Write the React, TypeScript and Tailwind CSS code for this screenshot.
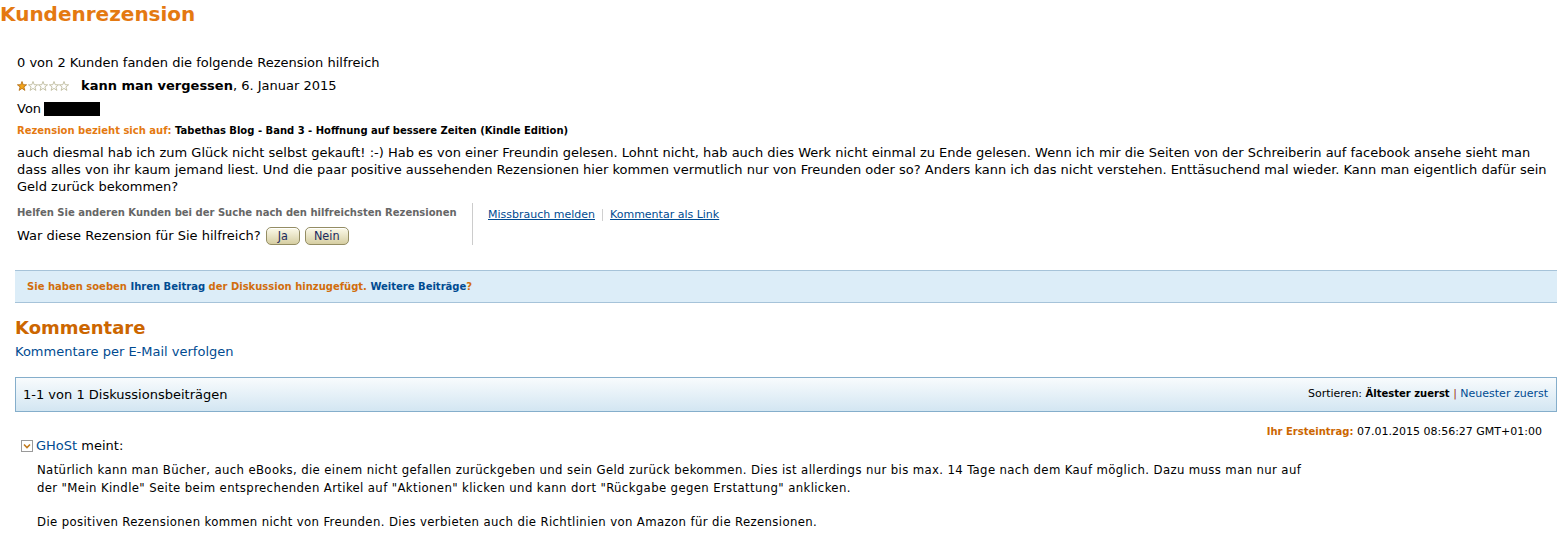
import React from "react";

const FONT = "font-['DejaVu_Sans','Verdana',sans-serif]";

function Star({ filled }: { filled: boolean }) {
  return (
    <svg width="10" height="10" viewBox="0 0 10 10" className="block">
      <polygon
        points="5,0.5 6.2,3.7 9.6,3.8 6.9,5.9 7.9,9.4 5,7.4 2.1,9.4 3.1,5.9 0.4,3.8 3.8,3.7"
        fill={filled ? "#f3a51b" : "#ffffff"}
        stroke={filled ? "#b06a10" : "#b8b493"}
        strokeWidth="0.8"
        strokeLinejoin="round"
      />
    </svg>
  );
}

function Stars({ rating }: { rating: number }) {
  return (
    <div className="flex items-center gap-[0.5px] w-[53px]">
      {[1, 2, 3, 4, 5].map((i) => (
        <Star key={i} filled={i <= rating} />
      ))}
    </div>
  );
}

function VoteButton({ label, width }: { label: string; width: string }) {
  return (
    <button
      className={`${width} h-[18px] rounded-[5px] border border-[#948d63] bg-gradient-to-b from-[#fcfaea] to-[#d6cea2] text-[12.5px] leading-[16px] text-[#1c2a5e] font-['DejaVu_Sans_Condensed','DejaVu_Sans',sans-serif] [font-stretch:condensed] shadow-[inset_0_1px_0_#fff]`}
    >
      {label}
    </button>
  );
}

function ToggleIcon() {
  return (
    <svg width="12" height="12" viewBox="0 0 12 12" className="block">
      <rect x="0.5" y="0.5" width="11" height="11" fill="#fff" stroke="#9a9a9a" />
      <polyline points="3,4.5 6,7.5 9,4.5" fill="none" stroke="#c07a1e" strokeWidth="1.6" />
    </svg>
  );
}

export default function App() {
  return (
    <div className={`${FONT} w-[1568px] h-[542px] overflow-hidden bg-white text-black text-[13px]`}>
      {/* ================= REVIEW ================= */}
      <h1 className="text-[20px] leading-[28px] font-bold text-[#e47911]">Kundenrezension</h1>

      <div className="ml-[15px] mr-[11px]">
        <div className="pl-[2px]">
          <div className="mt-[26px] leading-[17px]">0 von 2 Kunden fanden die folgende Rezension hilfreich</div>

          <div className="mt-[6px] flex items-center h-[17px]">
            <Stars rating={1} />
            <span className="ml-[11px]">
              <b>kann man vergessen</b>, 6. Januar 2015
            </span>
          </div>

          <div className="mt-[6px] flex items-center h-[17px]">
            <span>Von</span>
            <span className="ml-[3px] inline-block w-[56px] h-[14px] bg-black" />
          </div>

          <div className="mt-[7px] text-[10px] leading-[14px] font-bold">
            <span className="text-[#e47911]">Rezension bezieht sich auf:</span>{" "}
            <span>Tabethas Blog - Band 3 - Hoffnung auf bessere Zeiten (Kindle Edition)</span>
          </div>

          <p className="mt-[6px] leading-[17px] whitespace-nowrap">
            auch diesmal hab ich zum Glück nicht selbst gekauft! :-) Hab es von einer Freundin gelesen. Lohnt nicht, hab auch dies Werk nicht einmal zu Ende gelesen. Wenn ich mir die Seiten von der Schreiberin auf facebook ansehe sieht man
            <br />
            dass alles von ihr kaum jemand liest. Und die paar positive aussehenden Rezensionen hier kommen vermutlich nur von Freunden oder so? Anders kann ich das nicht verstehen. Enttäsuchend mal wieder. Kann man eigentlich dafür sein
            <br />
            Geld zurück bekommen?
          </p>

          {/* helpful votes + links */}
          <div className="mt-[8px] flex">
            <div className="w-[456px] h-[42px] border-r border-[#cccccc] pt-[3px]">
              <div className="text-[10px] leading-[14px] font-bold text-[#666666] whitespace-nowrap">
                Helfen Sie anderen Kunden bei der Suche nach den hilfreichsten Rezensionen
              </div>
              <div className="mt-[7px] flex items-center h-[18px] gap-[5px]">
                <span>War diese Rezension für Sie hilfreich?</span>
                <VoteButton label="Ja" width="w-[34px]" />
                <VoteButton label="Nein" width="w-[44px]" />
              </div>
            </div>
            <div className="pl-[15px] pt-[3px] flex items-center h-[20px] text-[11px] leading-[14px] text-[#004b91]">
              <a className="underline">Missbrauch melden</a>
              <span className="mx-[7px] w-px h-[12px] bg-[#d0d0d0]" />
              <a className="underline">Kommentar als Link</a>
            </div>
          </div>
        </div>

        {/* ================= INFO BAR ================= */}
        <div className="mt-[25px] h-[33px] border-y border-[#a6c3d9] bg-[#dcedf8] flex items-center pl-[12px] text-[10px] font-bold text-[#d16d0d]">
          <span>
            Sie haben soeben <span className="text-[#004b91]">Ihren Beitrag</span> der Diskussion hinzugefügt.{" "}
            <span className="text-[#004b91]">Weitere Beiträge</span>?
          </span>
        </div>

        {/* ================= COMMENTS ================= */}
        <h2 className="mt-[14px] text-[18px] leading-[22px] font-bold text-[#cc6600]">Kommentare</h2>
        <a className="block mt-[4px] leading-[17px] text-[#004b91]">Kommentare per E-Mail verfolgen</a>

        <div className="mt-[17px] h-[35px] border border-[#85aecb] bg-gradient-to-b from-[#f8fbfd] to-[#d3e6f2] flex items-center justify-between pl-[7px] pr-[8px]">
          <span>1-1 von 1 Diskussionsbeiträgen</span>
          <span className="text-[11px]">
            Sortieren: <b className="text-[10px]">Ältester zuerst</b> <span className="text-[#9b3a1a]">|</span>{" "}
            <a className="text-[#004b91]">Neuester zuerst</a>
          </span>
        </div>

        <div className="mt-[14px] pr-[15px] text-right text-[11px] leading-[12px]">
          <span className="font-bold text-[10px] text-[#cc6600]">Ihr Ersteintrag:</span> 07.01.2015 08:56:27 GMT+01:00
        </div>

        <div className="pl-[6px] flex items-center h-[15px] gap-[3px]">
          <ToggleIcon />
          <span>
            <a className="text-[#004b91]">GHoSt</a> meint:
          </span>
        </div>

        <div className="mt-[8px] pl-[22px] leading-[18px] whitespace-nowrap tracking-[0.37px] font-['DejaVu_Sans_Condensed','DejaVu_Sans',sans-serif] [font-stretch:condensed]">
          <p>
            Natürlich kann man Bücher, auch eBooks, die einem nicht gefallen zurückgeben und sein Geld zurück bekommen. Dies ist allerdings nur bis max. 14 Tage nach dem Kauf möglich. Dazu muss man nur auf
            <br />
            der "Mein Kindle" Seite beim entsprechenden Artikel auf "Aktionen" klicken und kann dort "Rückgabe gegen Erstattung" anklicken.
          </p>
          <p className="mt-[16px]">
            Die positiven Rezensionen kommen nicht von Freunden. Dies verbieten auch die Richtlinien von Amazon für die Rezensionen.
          </p>
        </div>
      </div>
    </div>
  );
}
